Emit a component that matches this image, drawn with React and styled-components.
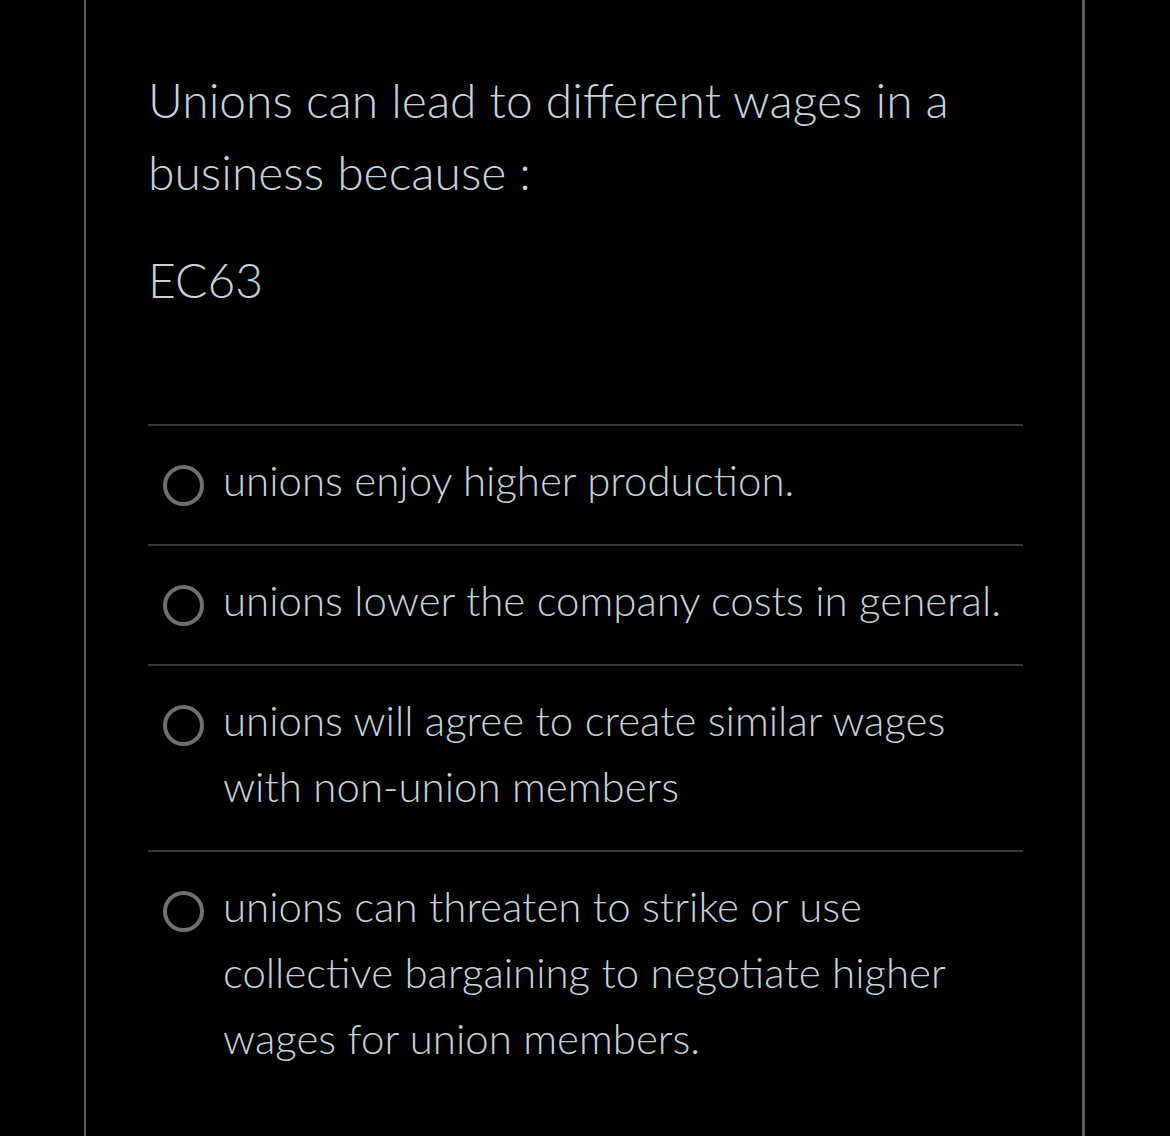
import React from "react";
import styled, { createGlobalStyle } from "styled-components";

const Global = createGlobalStyle`
  html, body { margin: 0; padding: 0; background: #000; }
  body { font-family: "Lato Light", Lato, "Noto Sans", sans-serif; }
`;

const Page = styled.div`
  background: #000;
  min-height: 1136px;
  padding: 0 85px 0 84px;
`;

const Panel = styled.div`
  min-height: 1136px;
  border-left: 2px solid #5c5c5c;
  border-right: 3px solid #5c5c5c;
  padding: 64px 59px 0 62px;
  box-sizing: border-box;
  color: #c6d2dc;
  font-weight: 300;
`;

const Question = styled.div`
  font-size: 48px;
  line-height: 72px;
`;

const Code = styled.div`
  font-size: 48px;
  line-height: 72px;
  margin-top: 36px;
`;

const Options = styled.div`
  margin-top: 108px;
  border-top: 2px solid #383838;
`;

const Option = styled.label`
  display: flex;
  align-items: flex-start;
  gap: 19px;
  padding: 21px 0 31px 15px;
  border-bottom: 2px solid #383838;
  &:last-child { border-bottom: none; }
`;

const Radio = styled.span`
  flex: none;
  width: 33px;
  height: 33px;
  border: 4px solid #707072;
  border-radius: 50%;
  margin-top: 18px;
`;

const OptionText = styled.span`
  font-size: 42px;
  line-height: 66px;
`;

const options = [
  "unions enjoy higher production.",
  "unions lower the company costs in general.",
  "unions will agree to create similar wages with non-union members",
  "unions can threaten to strike or use collective bargaining to negotiate higher wages for union members.",
];

export default function App() {
  return (
    <Page>
      <Global />
      <Panel>
        <Question>Unions can lead to different wages in a business because :</Question>
        <Code>EC63</Code>
        <Options>
          {options.map((o) => (
            <Option key={o}>
              <Radio />
              <OptionText>{o}</OptionText>
            </Option>
          ))}
        </Options>
      </Panel>
    </Page>
  );
}
